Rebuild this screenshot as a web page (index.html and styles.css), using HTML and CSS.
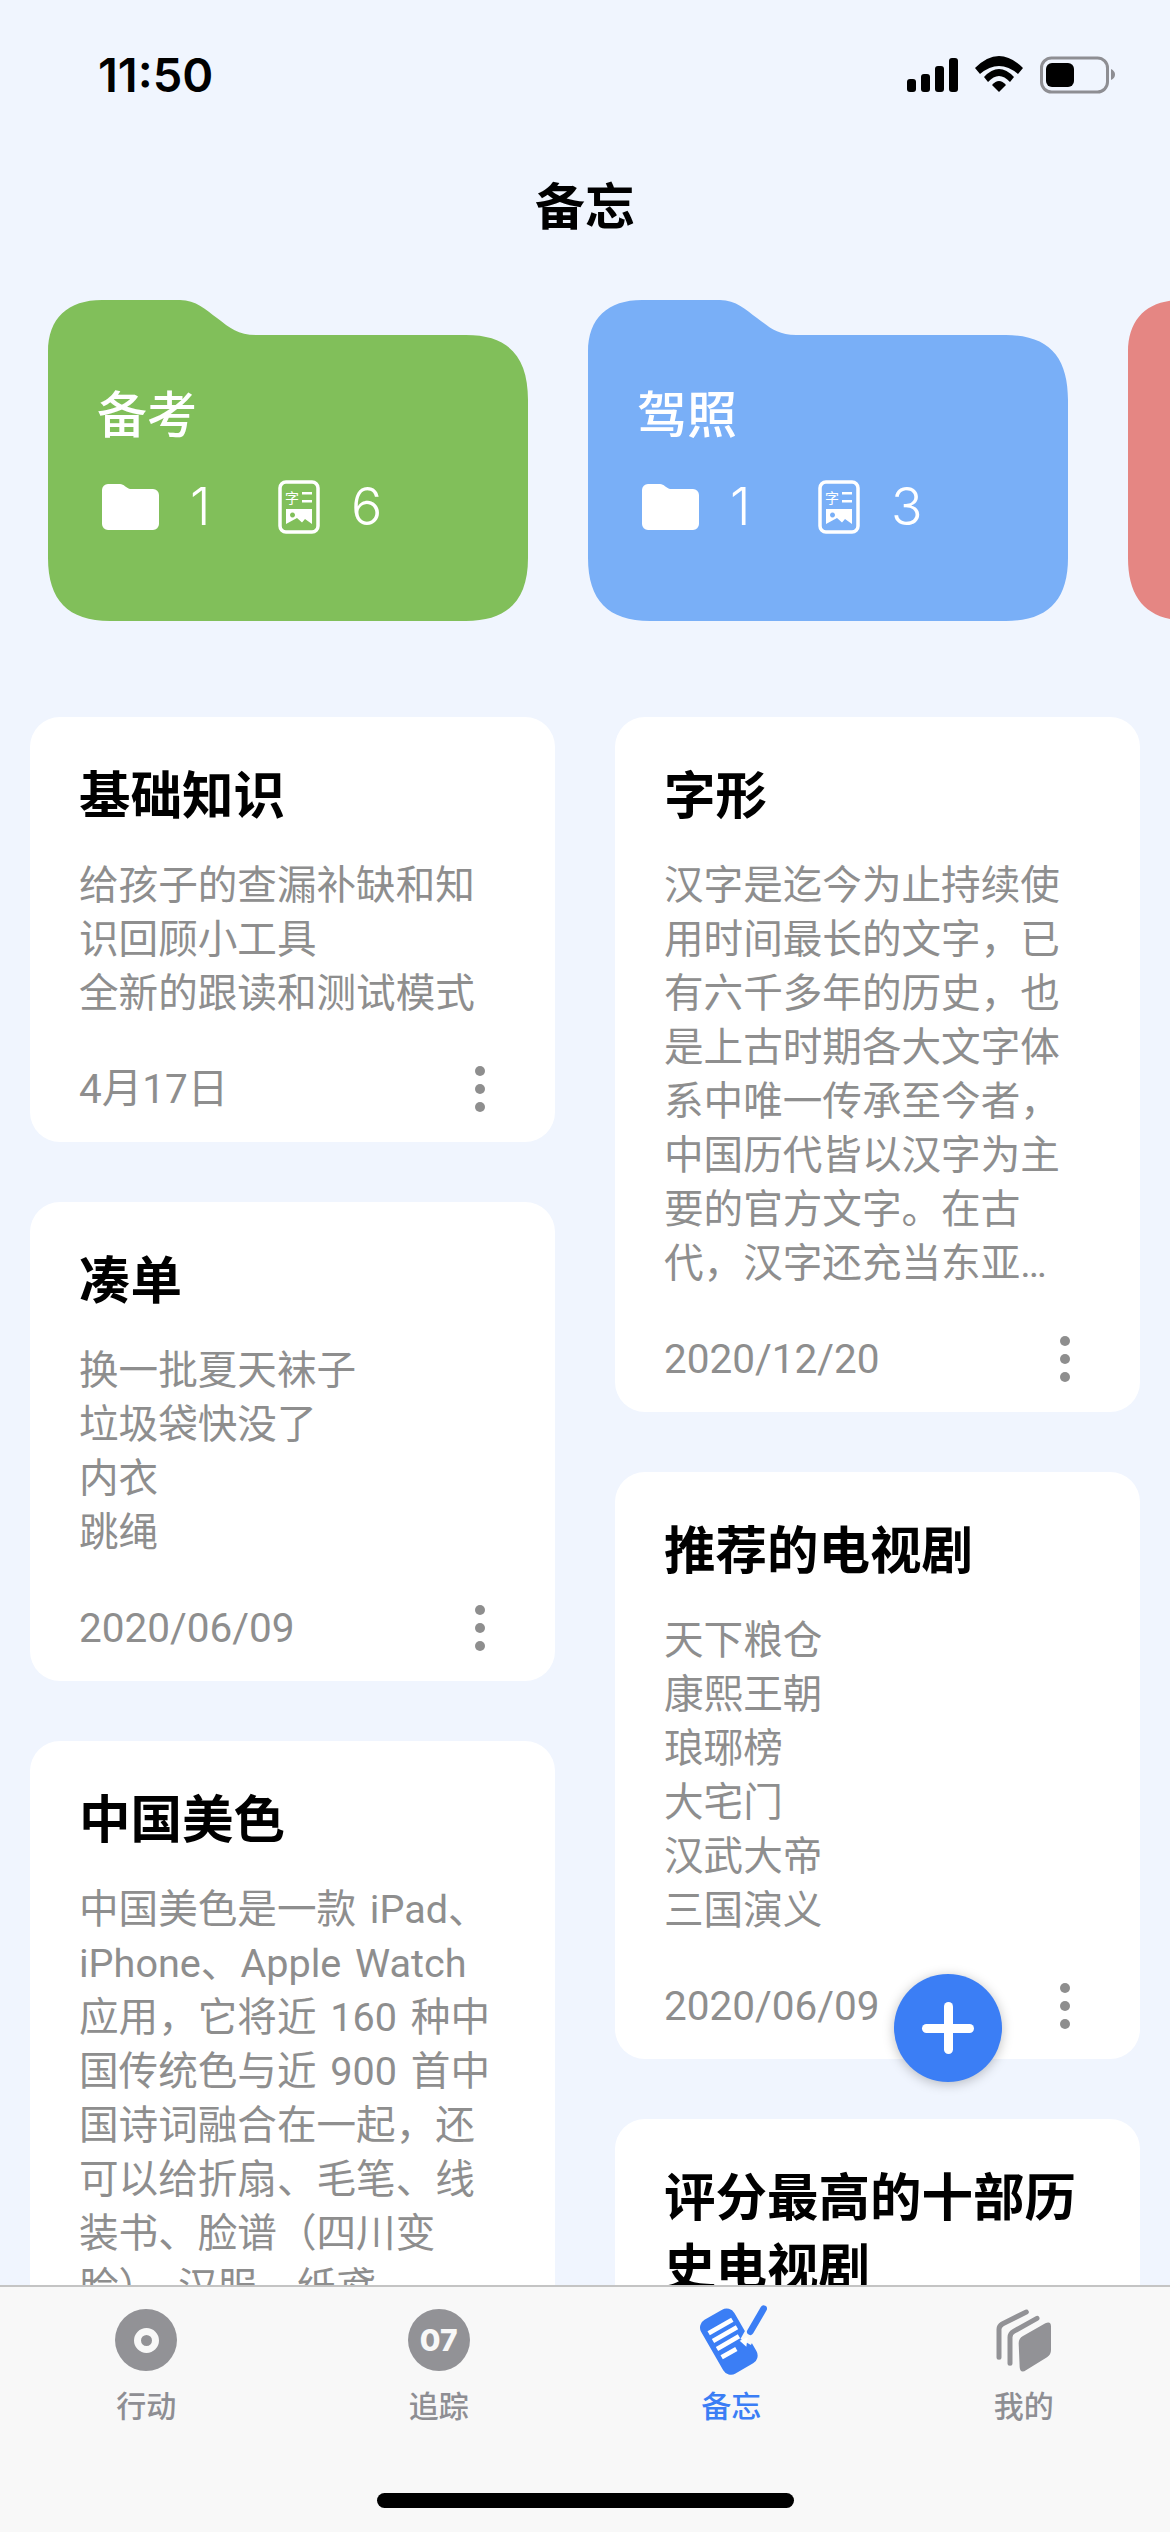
FILE: index.html
```html
<!DOCTYPE html>
<html lang="zh-CN">
    <head>
        <meta charset="UTF-8" />
        <meta name="viewport" content="width=device-width, initial-scale=1.0" />
        <title>备忘</title>
        <link rel="stylesheet" href="styles.css">
    </head>
    <body>
        <div class="pantalla">
            <!-- BARRA DE ESTADO -->
            <div class="estado">
                <span class="hora">11:50</span>
                <svg class="estado-iconos" width="208" height="38" viewBox="907 55 208 38">
                    <rect x="907" y="78" width="9" height="13" rx="3"/>
                    <rect x="921" y="73" width="9" height="18" rx="3"/>
                    <rect x="935" y="65" width="9" height="26" rx="3"/>
                    <rect x="949" y="57" width="9" height="34" rx="3"/>
                    <g transform="translate(975 55)">
                        <path d="M0 12 Q24 -12 48 12 L43 18 Q24 2 5 18 Z"/>
                        <path d="M9 21 Q24 5 39 21 L35 26 Q24 14 13 26 Z"/>
                        <path d="M17 29 Q24 21 31 29 L24 36 Z"/>
                    </g>
                    <rect x="1041.5" y="57" width="66" height="34" rx="10" fill="none" stroke="#8e8e93" stroke-width="3"/>
                    <rect x="1046" y="62" width="28" height="24" rx="6"/>
                    <path d="M1111 68 Q1115 70 1115 73.5 Q1115 77 1111 79 Z" fill="#8e8e93"/>
                </svg>
            </div>

            <h1 class="titulo">备忘</h1>

            <!-- CARPETAS -->
            <div class="carpetas">
                <div class="carpeta carpeta-verde">
                    <svg class="carpeta-forma" width="480" height="321" viewBox="0 0 480 321"><path d="M0 52 C0 18 20 0 54 0 H132 C148 0 158 10 169 18 C182 28 190 35 208 35 H418 C462 35 480 58 480 100 V258 C480 300 460 321 418 321 H62 C20 321 0 300 0 258 Z"/></svg>
                    <div class="carpeta-nombre">备考</div>
                    <div class="carpeta-datos">
                        <svg class="icono-carpeta" width="57" height="46" viewBox="0 0 57 46"><path d="M6 0 H18 C22 0 24 4 28 5 H51 A6 6 0 0 1 57 11 V40 A6 6 0 0 1 51 46 H6 A6 6 0 0 1 0 40 V6 A6 6 0 0 1 6 0 Z"/></svg>
                        <span class="dato dato-carpetas">1</span>
                        <svg class="icono-nota" width="42" height="54" viewBox="0 0 42 54">
                            <rect x="2" y="2" width="38" height="50" rx="6" fill="none" stroke="#fff" stroke-width="3.5"/>
                            <text x="7" y="23" font-size="14">字</text>
                            <rect x="24" y="12" width="10" height="2.5"/>
                            <rect x="24" y="20" width="10" height="2.5"/>
                            <path fill-rule="evenodd" d="M8 29 H34 V44 L27 39 L24 42.5 L19 38 L8 44 Z M14.5 32.5 a2.5 2.5 0 1 0 0.01 0 Z"/>
                        </svg>
                        <span class="dato">6</span>
                    </div>
                </div>
                <div class="carpeta carpeta-azul">
                    <svg class="carpeta-forma" width="480" height="321" viewBox="0 0 480 321"><path d="M0 52 C0 18 20 0 54 0 H132 C148 0 158 10 169 18 C182 28 190 35 208 35 H418 C462 35 480 58 480 100 V258 C480 300 460 321 418 321 H62 C20 321 0 300 0 258 Z"/></svg>
                    <div class="carpeta-nombre">驾照</div>
                    <div class="carpeta-datos">
                        <svg class="icono-carpeta" width="57" height="46" viewBox="0 0 57 46"><path d="M6 0 H18 C22 0 24 4 28 5 H51 A6 6 0 0 1 57 11 V40 A6 6 0 0 1 51 46 H6 A6 6 0 0 1 0 40 V6 A6 6 0 0 1 6 0 Z"/></svg>
                        <span class="dato dato-carpetas">1</span>
                        <svg class="icono-nota" width="42" height="54" viewBox="0 0 42 54">
                            <rect x="2" y="2" width="38" height="50" rx="6" fill="none" stroke="#fff" stroke-width="3.5"/>
                            <text x="7" y="23" font-size="14">字</text>
                            <rect x="24" y="12" width="10" height="2.5"/>
                            <rect x="24" y="20" width="10" height="2.5"/>
                            <path fill-rule="evenodd" d="M8 29 H34 V44 L27 39 L24 42.5 L19 38 L8 44 Z M14.5 32.5 a2.5 2.5 0 1 0 0.01 0 Z"/>
                        </svg>
                        <span class="dato">3</span>
                    </div>
                </div>
                <div class="carpeta carpeta-roja">
                    <svg class="carpeta-forma" width="480" height="321" viewBox="0 0 480 321"><path d="M0 52 C0 18 20 0 54 0 H132 C148 0 158 10 169 18 C182 28 190 35 208 35 H418 C462 35 480 58 480 100 V258 C480 300 460 321 418 321 H62 C20 321 0 300 0 258 Z"/></svg>
                </div>
            </div>

            <!-- NOTAS -->
            <div class="notas">
                <div class="columna">
                    <div class="nota">
                        <h2>基础知识</h2>
                        <p>给孩子的查漏补缺和知<br>识回顾小工具<br>全新的跟读和测试模式</p>
                        <div class="nota-pie"><span>4月17日</span><span class="puntos"><i></i><i></i><i></i></span></div>
                    </div>
                    <div class="nota">
                        <h2>凑单</h2>
                        <p>换一批夏天袜子<br>垃圾袋快没了<br>内衣<br>跳绳</p>
                        <div class="nota-pie"><span>2020/06/09</span><span class="puntos"><i></i><i></i><i></i></span></div>
                    </div>
                    <div class="nota">
                        <h2>中国美色</h2>
                        <p>中国美色是一款 iPad、<br>iPhone、Apple Watch<br>应用，它将近 160 种中<br>国传统色与近 900 首中<br>国诗词融合在一起，还<br>可以给折扇、毛笔、线<br>装书、脸谱（四川变<br>脸）、汉服、纸鸢</p>
                    </div>
                </div>
                <div class="columna">
                    <div class="nota">
                        <h2>字形</h2>
                        <p class="recortado">汉字是迄今为止持续使<br>用时间最长的文字，已<br>有六千多年的历史，也<br>是上古时期各大文字体<br>系中唯一传承至今者，<br>中国历代皆以汉字为主<br>要的官方文字。在古<br>代，汉字还充当东亚…</p>
                        <div class="nota-pie"><span>2020/12/20</span><span class="puntos"><i></i><i></i><i></i></span></div>
                    </div>
                    <div class="nota">
                        <h2>推荐的电视剧</h2>
                        <p>天下粮仓<br>康熙王朝<br>琅琊榜<br>大宅门<br>汉武大帝<br>三国演义</p>
                        <div class="nota-pie"><span>2020/06/09</span><span class="puntos"><i></i><i></i><i></i></span></div>
                    </div>
                    <div class="nota">
                        <h2>评分最高的十部历史电视剧</h2>
                    </div>
                </div>
            </div>

            <button class="agregar" aria-label="添加"><span class="mas"></span></button>

            <!-- BARRA DE PESTAÑAS -->
            <nav class="pestanas">
                <div class="pestana">
                    <div class="pestana-icono"><span class="disco"><span class="disco-punto"></span></span></div>
                    <span>行动</span>
                </div>
                <div class="pestana">
                    <div class="pestana-icono"><span class="disco disco-numero">07</span></div>
                    <span>追踪</span>
                </div>
                <div class="pestana pestana-activa">
                    <div class="pestana-icono">
                        <svg width="72" height="72" viewBox="106 72 216 216">
                            <rect x="150" y="92" width="115" height="186" rx="27" transform="rotate(-30 207 185)" fill="#3b7ef5"/>
                            <path d="M147 160 L218 119 M160 183 L232 142 M172 207 L238 169 M186 232 L230 207" stroke="#fff" stroke-width="14"/>
                            <path d="M258 186 L312 90" stroke="#f8f8f8" stroke-width="36"/>
                            <path d="M272 155 L312 86" stroke="#3b7ef5" stroke-width="20" stroke-linecap="round"/>
                            <path d="M240 182 L264 172 L260 200 Z" fill="#fff"/>
                        </svg>
                    </div>
                    <span>备忘</span>
                </div>
                <div class="pestana">
                    <div class="pestana-icono">
                        <svg width="72" height="72" viewBox="983 72 216 216">
                            <path d="M1016 232 V148 Q1016 138 1026 132 L1098 96" fill="none" stroke="#929296" stroke-width="15" stroke-linecap="round"/>
                            <path d="M1049 250 V172 Q1049 160 1060 154 L1130 115" fill="none" stroke="#929296" stroke-width="15" stroke-linecap="round"/>
                            <path d="M1075 190 Q1075 175 1088 168 L1155 130 Q1172 122 1172 140 V210 Q1172 224 1160 232 L1098 270 Q1080 282 1078 262 Z" fill="#929296"/>
                        </svg>
                    </div>
                    <span>我的</span>
                </div>
                <div class="barra-inicio"></div>
            </nav>
        </div>
    </body>
</html>
```

FILE: styles.css
```css
/* ESTILOS 备忘 */
* {
    box-sizing: border-box;
    margin: 0;
    padding: 0;
}

body {
    background: #f0f5fe;
    font-family: Inter, "Noto Sans CJK SC", sans-serif;
}

.pantalla {
    position: relative;
    width: 1170px;
    height: 2532px;
    overflow: hidden;
}

/* Barra de estado */
.estado {
    display: flex;
    justify-content: space-between;
    align-items: center;
    height: 150px;
    padding: 0 55px 0 98px;
}

.hora {
    margin-bottom: 2px;
    font-size: 47px;
    font-weight: 600;
    color: #000;
}

.estado-iconos {
    display: block;
}

.titulo {
    height: 112px;
    margin-top: 1px;
    font-size: 50px;
    font-weight: 700;
    line-height: 112px;
    text-align: center;
    color: #000;
}

/* Carpetas */
.carpetas {
    display: flex;
    gap: 60px;
    margin-top: 37px;
    padding-left: 48px;
}

.carpeta {
    position: relative;
    flex: 0 0 480px;
    height: 321px;
    padding: 85px 0 0 49px;
    color: #fff;
}

.carpeta-forma {
    position: absolute;
    top: 0;
    left: 0;
}

.carpeta-verde .carpeta-forma {
    fill: #81bf5a;
}

.carpeta-azul .carpeta-forma {
    fill: #79aff7;
}

.carpeta-roja .carpeta-forma {
    fill: #e58683;
}

.carpeta-nombre {
    position: relative;
    font-size: 50px;
    font-weight: 500;
    line-height: 60px;
}

.carpeta-datos {
    position: relative;
    display: flex;
    align-items: center;
    height: 54px;
    margin-top: 35px;
    padding-left: 5px;
}

.carpeta-datos svg {
    fill: #fff;
}

.dato {
    margin-left: 31px;
    font-size: 52px;
    font-weight: 300;
    line-height: 54px;
}

.dato-carpetas {
    width: 88px;
}

/* Notas */
.notas {
    display: grid;
    grid-template-columns: 525px 525px;
    gap: 60px;
    margin-top: 96px;
    padding-left: 30px;
}

.columna {
    display: flex;
    flex-direction: column;
    gap: 60px;
}

.nota {
    padding: 45px 49px 26px;
    font-family: Roboto, "Noto Sans CJK SC", sans-serif;
    background: #fff;
    border-radius: 30px;
}

.nota h2 {
    font-size: 51.5px;
    font-weight: 700;
    line-height: 70px;
    color: #000;
}

.nota p {
    margin-top: 27px;
    font-size: 39.6px;
    line-height: 54px;
    word-spacing: 4px;
    color: #8e8e8e;
}

.recortado {
    overflow: hidden;
}

.nota-pie {
    display: flex;
    justify-content: space-between;
    align-items: center;
    margin-top: 41px;
    font-size: 40.5px;
    line-height: 54px;
    color: #8e8e8e;
}

.puntos {
    display: flex;
    flex-direction: column;
    gap: 8px;
    margin-right: 21px;
}

.puntos i {
    display: block;
    width: 10px;
    height: 10px;
    background: #8e8e8e;
    border-radius: 50%;
}

/* Botón flotante */
.agregar {
    position: absolute;
    top: 1974px;
    left: 894px;
    display: flex;
    justify-content: center;
    align-items: center;
    width: 108px;
    height: 108px;
    background: #3b7ef5;
    border: none;
    border-radius: 50%;
    box-shadow: 0 2px 12px rgba(0, 0, 0, 0.25);
}

.mas {
    position: relative;
    display: block;
    width: 52px;
    height: 9px;
    background: #fff;
    border-radius: 5px;
}

.mas::after {
    content: "";
    position: absolute;
    top: -21.5px;
    left: 21.5px;
    width: 9px;
    height: 52px;
    background: #fff;
    border-radius: 5px;
}

/* Pestañas */
.pestanas {
    position: absolute;
    bottom: 0;
    left: 0;
    display: grid;
    grid-template-columns: repeat(4, 1fr);
    align-content: start;
    width: 100%;
    height: 247px;
    padding-top: 18px;
    background: #f8f8f8;
    border-top: 2px solid #c4c4c4;
}

.pestana {
    display: flex;
    flex-direction: column;
    align-items: center;
    gap: 11px;
    font-size: 30px;
    font-weight: 500;
    line-height: 40px;
    color: #8e8e93;
}

.pestana-activa {
    color: #3b7ef5;
}

.pestana-icono {
    display: flex;
    justify-content: center;
    align-items: center;
    height: 70px;
}

.disco {
    display: flex;
    justify-content: center;
    align-items: center;
    width: 62px;
    height: 62px;
    background: #929296;
    border-radius: 50%;
}

.disco-punto {
    width: 25px;
    height: 25px;
    border: 7px solid #f8f8f8;
    border-radius: 50%;
}

.disco-numero {
    font-size: 30px;
    font-weight: 800;
    color: #f8f8f8;
}

.barra-inicio {
    position: absolute;
    bottom: 24px;
    left: 377px;
    width: 417px;
    height: 15px;
    background: #000;
    border-radius: 8px;
}
```
